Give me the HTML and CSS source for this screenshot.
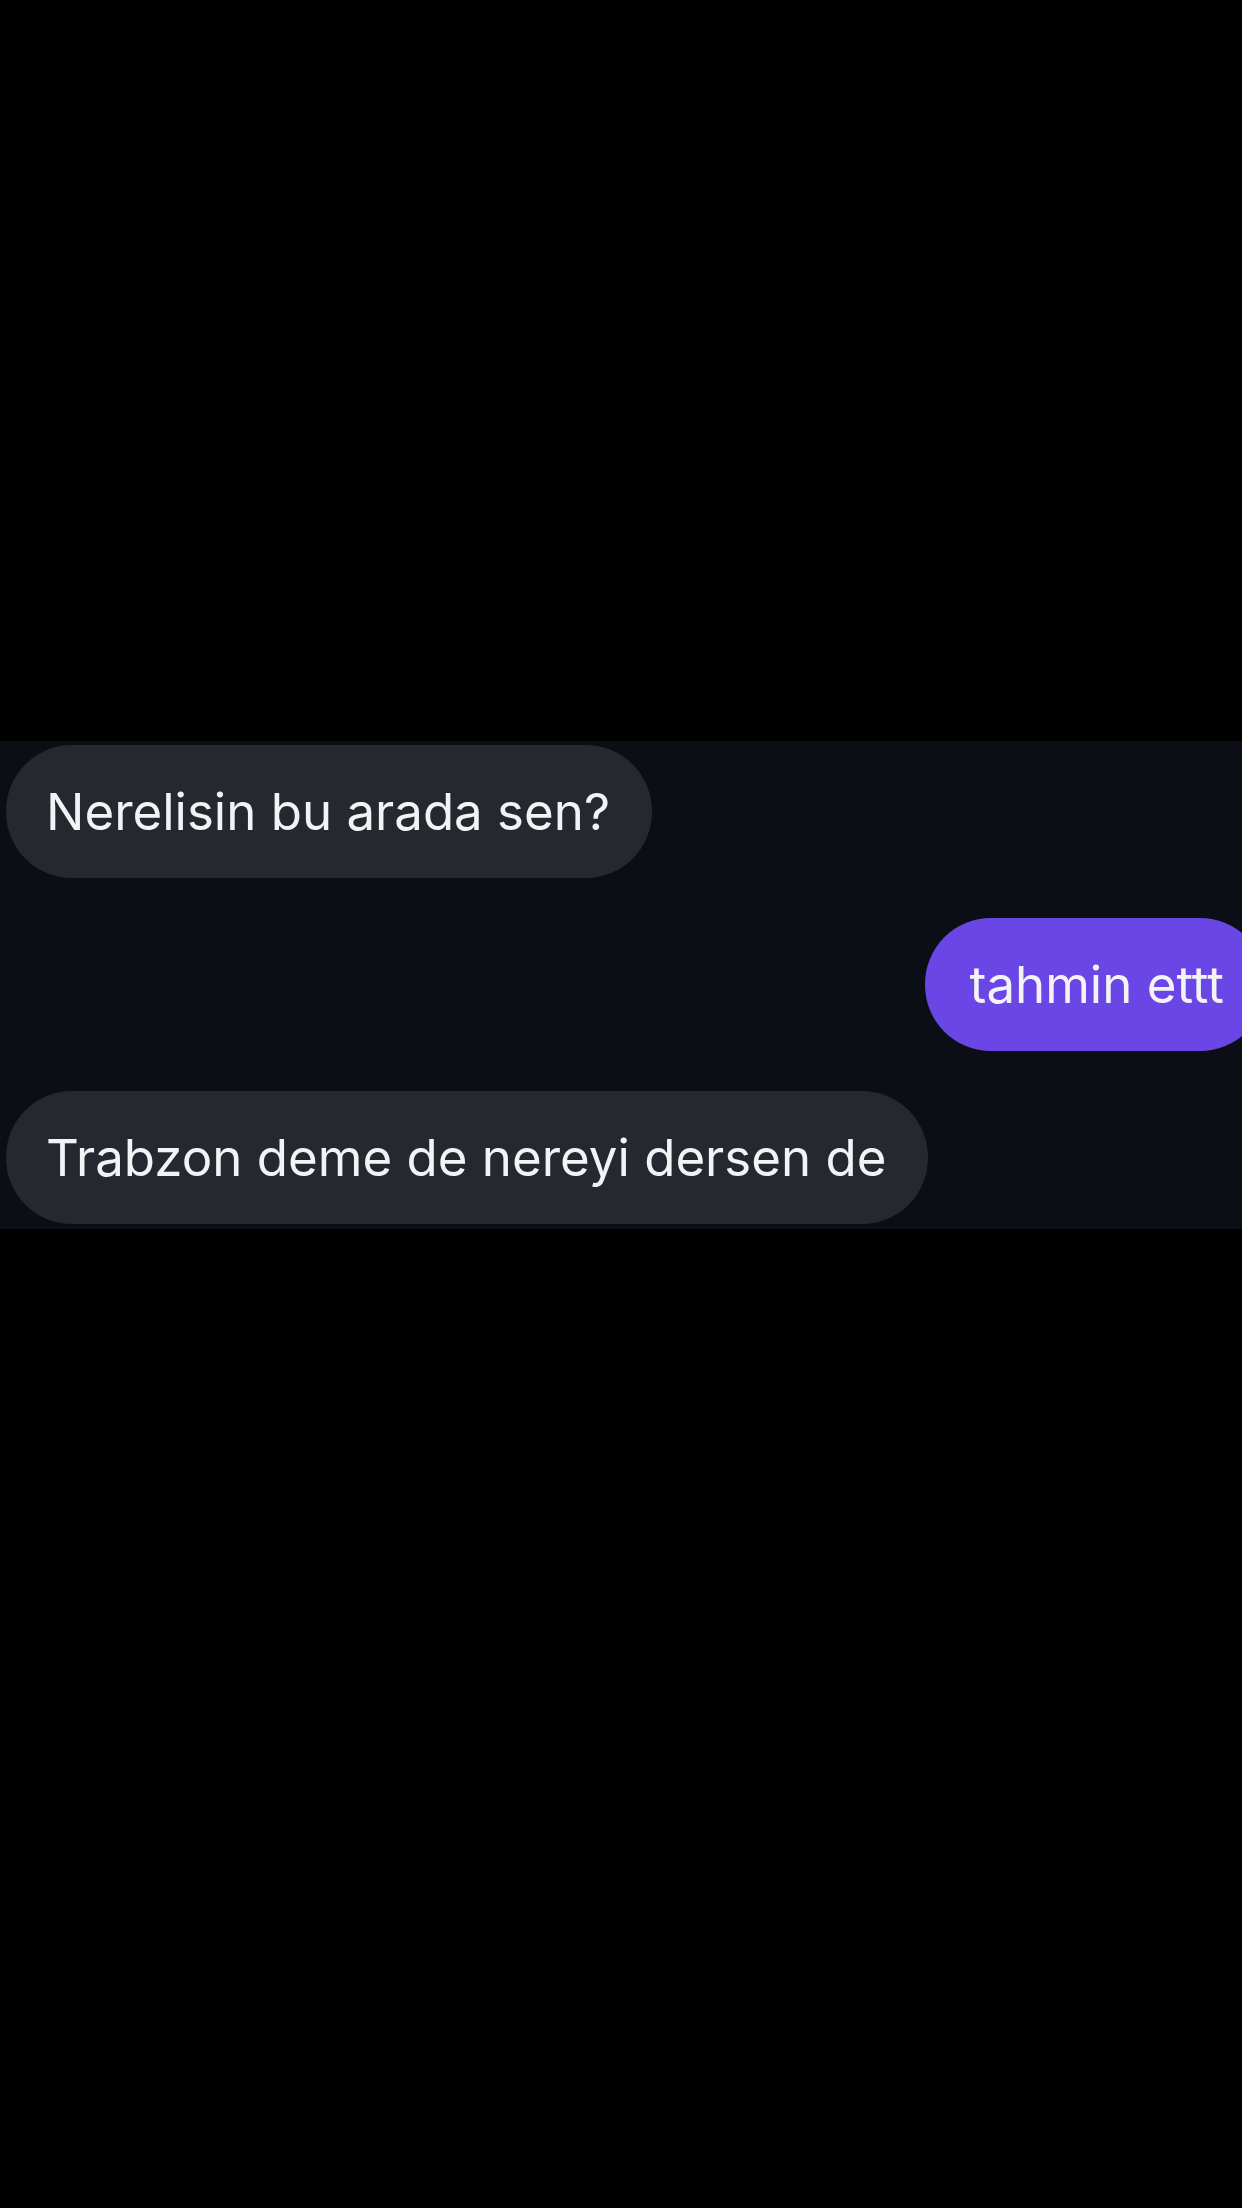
FILE: index.html
```html
<!DOCTYPE html>
<html lang="tr">
<head>
    <meta charset="UTF-8">
    <meta name="viewport" content="width=device-width, initial-scale=1.0">
    <title>Sohbet</title>
    <link rel="stylesheet" href="styles.css">
</head>
<body>
    <div class="screen">
        <div class="chat">
            <div class="row incoming">
                <div class="bubble">Nerelisin bu arada sen?</div>
            </div>
            <div class="row outgoing">
                <div class="bubble">tahmin ettt</div>
            </div>
            <div class="row incoming">
                <div class="bubble">Trabzon deme de nereyi dersen de</div>
            </div>
        </div>
    </div>
</body>
</html>
```

FILE: styles.css
```css
html, body {
    margin: 0;
    padding: 0;
    background-color: #000;
}
.screen {
    width: 1242px;
    height: 2208px;
    overflow: hidden;
    padding-top: 741px;
    box-sizing: border-box;
}
.chat {
    background-color: #0b0e15;
    padding: 4px 0 5px;
    display: flex;
    flex-direction: column;
    gap: 40px;
    font-family: Inter, "Noto Sans", sans-serif;
}
.row {
    display: flex;
}
.row.incoming {
    justify-content: flex-start;
    padding-left: 6px;
}
.row.outgoing {
    justify-content: flex-end;
    margin-right: -24px;
}
.bubble {
    height: 133px;
    display: flex;
    align-items: center;
    padding: 0 42px 0 40px;
    border-radius: 66px;
    font-size: 51px;
    color: #f3f3f5;
    white-space: nowrap;
    box-sizing: border-box;
}
.incoming .bubble {
    background-color: #25282f;
}
.outgoing .bubble {
    background-color: #6a46e6;
    padding: 0 42px 0 44px;
}
```
